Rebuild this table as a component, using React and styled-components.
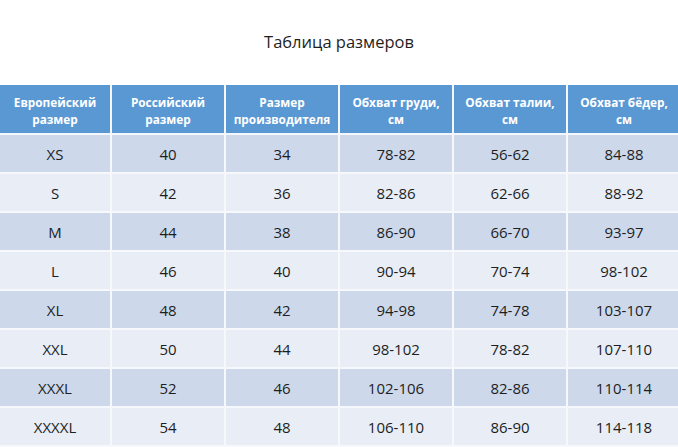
import React from "react";
import styled, { createGlobalStyle } from "styled-components";

const Global = createGlobalStyle`
  html, body { margin: 0; padding: 0; background: #ffffff; overflow: hidden; }
  body { font-family: "Open Sans", "Noto Sans", sans-serif; }
`;

const Page = styled.div`
  width: 678px;
  height: 447px;
  overflow: hidden;
  background: #ffffff;
  display: flex;
  flex-direction: column;
`;

const TitleBar = styled.div`
  height: 88px;
  display: flex;
  align-items: center;
  justify-content: center;
`;

const Title = styled.h1`
  margin: 0;
  font-weight: 400;
  font-size: 16.5px;
  color: #1f1f1f;
  transform: translateY(-1px);
`;

const Table = styled.table`
  border-collapse: separate;
  border-spacing: 0;
  table-layout: fixed;
  width: 682px;
  flex: none;
`;

const HeadCell = styled.th`
  width: ${(p) => (p.$first ? 110 : 112)}px;
  height: 44px;
  padding: 4px 0 0;
  box-sizing: content-box;
  background: #5a98d4;
  color: #ffffff;
  font-weight: 700;
  font-size: 11.8px;
  line-height: 17px;
  text-align: center;
  vertical-align: middle;
  border-right: 2px solid #f4f7fc;
  border-bottom: 2px solid #f4f7fc;
`;

const Cell = styled.td`
  height: 37px;
  padding: 0;
  background: ${(p) => (p.$odd ? "#cdd9eb" : "#e8edf6")};
  color: #1e1e1e;
  font-size: 15px;
  text-align: center;
  vertical-align: middle;
  border-right: 2px solid #f6f8fc;
  border-bottom: 2px solid #f6f8fc;
`;

const headers = [
  ["Европейский", "размер"],
  ["Российский", "размер"],
  ["Размер", "производителя"],
  ["Обхват груди,", "см"],
  ["Обхват талии,", "см"],
  ["Обхват бёдер,", "см"],
];

const rows = [
  ["XS", "40", "34", "78-82", "56-62", "84-88"],
  ["S", "42", "36", "82-86", "62-66", "88-92"],
  ["M", "44", "38", "86-90", "66-70", "93-97"],
  ["L", "46", "40", "90-94", "70-74", "98-102"],
  ["XL", "48", "42", "94-98", "74-78", "103-107"],
  ["XXL", "50", "44", "98-102", "78-82", "107-110"],
  ["XXXL", "52", "46", "102-106", "82-86", "110-114"],
  ["XXXXL", "54", "48", "106-110", "86-90", "114-118"],
];

export default function App() {
  return (
    <Page>
      <Global />
      <TitleBar>
        <Title>Таблица размеров</Title>
      </TitleBar>
      <Table>
        <thead>
          <tr>
            {headers.map((h, i) => (
              <HeadCell key={i} $first={i === 0}>
                {h[0]}
                <br />
                {h[1]}
              </HeadCell>
            ))}
          </tr>
        </thead>
        <tbody>
          {rows.map((r, ri) => (
            <tr key={ri}>
              {r.map((c, ci) => (
                <Cell key={ci} $odd={ri % 2 === 0}>
                  {c}
                </Cell>
              ))}
            </tr>
          ))}
        </tbody>
      </Table>
    </Page>
  );
}
